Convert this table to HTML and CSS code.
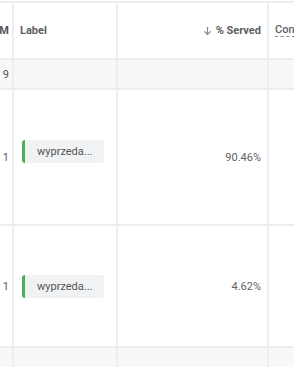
FILE: index.html
```html
<!DOCTYPE html>
<html>
<head>
<meta charset="utf-8">
<link rel="stylesheet" href="styles.css">
</head>
<body>
<div class="table">
  <div class="cell head c1"><span class="clip">M</span></div>
  <div class="cell head c2">Label</div>
  <div class="cell head c3"><span class="arrow"><svg width="9" height="10" viewBox="0 0 9 10"><path d="M4.5 1v7.5M1.3 5.3l3.2 3.2 3.2-3.2" fill="none" stroke="#888" stroke-width="1.2"/></svg></span>% Served</div>
  <div class="cell head c4"><span class="dotted">Con</span></div>

  <div class="cell sub c1"><span class="clip">9</span></div>
  <div class="cell sub"></div>
  <div class="cell sub"></div>
  <div class="cell sub"></div>

  <div class="cell r1 c1"><span class="clip num">1</span></div>
  <div class="cell r1 c2"><span class="badge">wyprzeda...</span></div>
  <div class="cell r1 c3 num">90.46%</div>
  <div class="cell r1"></div>

  <div class="cell r2 c1"><span class="clip num">1</span></div>
  <div class="cell r2 c2"><span class="badge">wyprzeda...</span></div>
  <div class="cell r2 c3 num">4.62%</div>
  <div class="cell r2"></div>

  <div class="cell sub"></div>
  <div class="cell sub"></div>
  <div class="cell sub"></div>
  <div class="cell sub"></div>
</div>
</body>
</html>
```
FILE: styles.css
```css
html, body {
  margin: 0;
  padding: 0;
  background: #fff;
  overflow: hidden;
}
body {
  font-family: Roboto, "Liberation Sans", sans-serif;
  color: #5f6368;
  font-size: 11px;
  padding-top: 1px;
}
.table {
  display: grid;
  grid-template-columns: 12px 102px 149px 25px;
  grid-template-rows: 55px 28px 134px 120px 30px;
  gap: 2px;
  background: #eceef0;
  padding-top: 2px;
  width: 294px;
}
.cell {
  background: #fff;
  display: flex;
  align-items: center;
  overflow: hidden;
  white-space: nowrap;
}
.cell.sub {
  background: #f7f8fa;
}
.head {
  font-weight: 700;
  color: #5a5e63;
}
.c1 {
  justify-content: flex-end;
  padding-right: 3px;
  color: #555;
}
.c2 {
  padding-left: 6px;
}
.c3 {
  justify-content: flex-end;
  padding-right: 6px;
}
.c4 {
  padding-left: 6px;
}
.clip {
  flex: none;
}
.num {
  font-weight: 400;
  color: #616161;
}
.arrow {
  display: inline-flex;
  margin-right: 4px;
}
.dotted {
  border-bottom: 1px dashed #888;
  line-height: 12px;
  font-weight: 500;
}
.badge {
  display: inline-flex;
  align-items: center;
  width: 82px;
  height: 23px;
  box-sizing: border-box;
  background: #f1f2f4;
  border-radius: 3px;
  border-left: 3px solid #4caf50;
  padding-left: 12px;
  margin-left: 2px;
  margin-top: -12px;
  color: #555;
}
.r2 .badge {
  margin-top: 0;
}
```
